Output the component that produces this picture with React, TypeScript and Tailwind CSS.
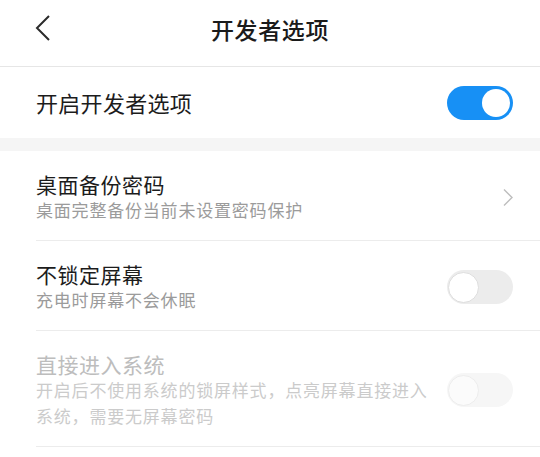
import React from "react";

const font = { fontFamily: '"Noto Sans CJK SC", "Noto Sans", sans-serif' };

function Toggle({ on, disabled }: { on?: boolean; disabled?: boolean }) {
  if (on) {
    return (
      <div className="flex h-[34px] w-[66px] shrink-0 items-center justify-end rounded-full bg-[#1790f5] px-[3px]">
        <div className="h-[28px] w-[28px] rounded-full bg-white" />
      </div>
    );
  }
  return (
    <div
      className={
        disabled
          ? "flex h-[34px] w-[66px] shrink-0 items-center rounded-full bg-[#f6f6f6] px-[1px]"
          : "flex h-[34px] w-[66px] shrink-0 items-center rounded-full bg-[#ececec] px-[1px]"
      }
    >
      <div
        className={
          disabled
            ? "h-[31px] w-[31px] rounded-full border border-[#ededed] bg-[#fbfbfb]"
            : "h-[31px] w-[31px] rounded-full border border-[#dedede] bg-white"
        }
      />
    </div>
  );
}

function Chevron() {
  return (
    <svg width="12" height="19" viewBox="0 0 12 19" className="mr-[-1px] shrink-0">
      <polyline points="2,1.5 10,9.5 2,17.5" fill="none" stroke="#bdbdbd" strokeWidth="1.4" />
    </svg>
  );
}

interface RowProps {
  title: string;
  sub: string;
  disabled?: boolean;
  right: React.ReactNode;
}

function Row({ title, sub, disabled, right }: RowProps) {
  return (
    <div className="flex items-center border-b border-[#ececec] pb-[17px] pt-[20px] pr-[27px]">
      <div className="flex-1 pr-[16px]">
        <div
          className={
            disabled
              ? "text-[21px] leading-[26px] tracking-[0.5px] text-[#bdbdbd]"
              : "text-[21px] leading-[26px] tracking-[0.5px] text-[#1c1c1c]"
          }
        >
          {title}
        </div>
        <div
          className={
            disabled
              ? "text-[17px] leading-[26px] tracking-[0.8px] text-[#cbcbcb]"
              : "text-[17px] leading-[26px] tracking-[0.8px] text-[#9b9b9b]"
          }
        >
          {sub}
        </div>
      </div>
      {right}
    </div>
  );
}

export default function App() {
  return (
    <div className="h-[457px] w-[540px] overflow-hidden bg-white" style={font}>
      <div className="h-[67px] border-b border-[#e6e6e6]">
        <div className="relative flex h-[58px] items-center justify-center">
          <svg width="16" height="26" viewBox="0 0 16 26" className="absolute left-[35px] top-[15px]">
            <polyline points="14,1 2,13 14,25" fill="none" stroke="#2b2b2b" strokeWidth="2" />
          </svg>
          <div className="text-[23px] font-medium tracking-[0.6px] text-[#1a1a1a]">开发者选项</div>
        </div>
      </div>
      <div className="flex h-[71px] items-center justify-between pl-[36px] pr-[27px]">
        <div className="text-[22px] tracking-[0.3px] text-[#1c1c1c]">开启开发者选项</div>
        <Toggle on />
      </div>
      <div className="h-[13px] bg-[#f5f5f5]" />
      <div className="pl-[36px]">
        <Row title="桌面备份密码" sub="桌面完整备份当前未设置密码保护" right={<Chevron />} />
        <Row title="不锁定屏幕" sub="充电时屏幕不会休眠" right={<Toggle />} />
        <Row
          title="直接进入系统"
          sub="开启后不使用系统的锁屏样式，点亮屏幕直接进入系统，需要无屏幕密码"
          disabled
          right={<Toggle disabled />}
        />
      </div>
    </div>
  );
}
